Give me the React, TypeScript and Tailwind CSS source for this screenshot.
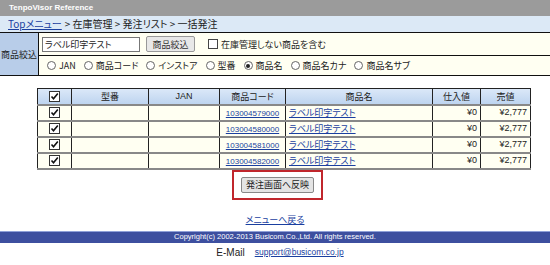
const jp = {
  fontFamily: '"Noto Sans CJK JP", "Liberation Sans", sans-serif',
  fontFeatureSettings: '"palt"',
};
const lat = { fontFamily: '"Liberation Sans", "Noto Sans CJK JP", sans-serif' };

const rows = ["103004579000", "103004580000", "103004581000", "103004582000"];

function Check() {
  return (
    <span className="inline-flex h-[11px] w-[11px] items-center justify-center border border-[#333] bg-white align-middle">
      <svg width="9" height="9" viewBox="0 0 9 9">
        <path d="M1.5 4.5 L3.5 6.8 L7.8 1.5" stroke="#111" strokeWidth="1.6" fill="none" />
      </svg>
    </span>
  );
}

function Radio({ on }: { on?: boolean }) {
  return (
    <span className="inline-flex h-[9px] w-[9px] items-center justify-center rounded-full border border-[#666] bg-white">
      {on && <span className="h-[4px] w-[4px] rounded-full bg-[#222]" />}
    </span>
  );
}

export default function App() {
  const radios = ["JAN", "商品コード", "インストア", "型番", "商品名", "商品名カナ", "商品名サブ"];

  return (
    <div className="h-[265px] w-[550px] overflow-hidden bg-white text-[10px] leading-none text-[#222]" style={jp}>
      <div className="flex h-[16px] items-center bg-[#9b9b9b] pl-[9px] text-[8px] font-bold text-white" style={lat}>
        TenpoVisor Reference
      </div>
      <div className="flex h-[16px] items-center bg-[#dce9f6] pl-[8px] text-[10px]">
        <a className="text-[#1a3fa0] underline">Topメニュー</a>
        <span className="ml-[3px]">&gt; 在庫管理 &gt; 発注リスト &gt; 一括発注</span>
      </div>

      <div className="flex h-[44px] border-y border-[#111]">
        <div className="flex w-[39px] items-center justify-center whitespace-nowrap border-r border-[#111] bg-[#b8cde9] text-[9px]">
          商品絞込
        </div>
        <div className="flex flex-1 flex-col bg-[#fffff2]">
          <div className="flex h-[23px] items-center border-b border-[#111] pl-[3px]">
            <div className="flex h-[15px] w-[98px] items-center border border-[#777] bg-white px-[2px] text-[9px]">
              ラベル印字テスト
            </div>
            <button className="ml-[6px] h-[16px] w-[49px] rounded-[2px] border border-[#999] bg-[#e8e8e8] text-[9px] text-[#333]">
              商品絞込
            </button>
            <span className="ml-[13px] inline-block h-[10px] w-[10px] border border-[#444] bg-white" />
            <span className="ml-[3px] text-[9px]">在庫管理しない商品を含む</span>
          </div>
          <div className="flex flex-1 items-center gap-[8px] pl-[8px] text-[9px]">
            {radios.map((r) => (
              <span key={r} className="flex items-center gap-[3px]">
                <Radio on={r === "商品名"} />
                {r}
              </span>
            ))}
          </div>
        </div>
      </div>

      <table className="ml-[37px] mt-[12px] w-[493px] table-fixed border-collapse text-[9px]">
        <colgroup>
          <col className="w-[34px]" />
          <col className="w-[77px]" />
          <col className="w-[71px]" />
          <col className="w-[66px]" />
          <col className="w-[147px]" />
          <col className="w-[48px]" />
          <col className="w-[50px]" />
        </colgroup>
        <thead>
          <tr className="h-[16px] bg-gradient-to-b from-[#dbe8f8] to-[#bcd3ef]">
            <th className="border border-[#222] p-0 font-normal"><Check /></th>
            <th className="border border-[#222] p-0 font-normal">型番</th>
            <th className="border border-[#222] p-0 font-normal" style={lat}>JAN</th>
            <th className="border border-[#222] p-0 font-normal">商品コード</th>
            <th className="border border-[#222] p-0 font-normal">商品名</th>
            <th className="border border-[#222] p-0 font-normal">仕入値</th>
            <th className="border border-[#222] p-0 font-normal">売値</th>
          </tr>
        </thead>
        <tbody>
          {rows.map((code) => (
            <tr key={code} className="h-[16px] bg-[#fffff2]">
              <td className="border-x border-y-2 border-x-[#222] border-y-[#888] p-0 text-center"><Check /></td>
              <td className="border-x border-y-2 border-x-[#222] border-y-[#888] p-0"></td>
              <td className="border-x border-y-2 border-x-[#222] border-y-[#888] p-0"></td>
              <td className="border-x border-y-2 border-x-[#222] border-y-[#888] p-0 text-center">
                <a className="text-[8px] text-[#1a3fa0] underline" style={lat}>
                  {code}
                </a>
              </td>
              <td className="border-x border-y-2 border-x-[#222] border-y-[#888] p-0 pl-[3px]">
                <a className="text-[#1a3fa0] underline">ラベル印字テスト</a>
              </td>
              <td className="border-x border-y-2 border-x-[#222] border-y-[#888] p-0 pr-[3px] text-right" style={lat}>¥0</td>
              <td className="border-x border-y-2 border-x-[#222] border-y-[#888] p-0 pr-[3px] text-right" style={lat}>¥2,777</td>
            </tr>
          ))}
        </tbody>
      </table>

      <div className="flex justify-center">
        <div className="ml-[5px] flex h-[30px] w-[91px] items-center justify-center border-2 border-[#c0262c]">
          <button className="h-[16px] w-[73px] rounded-[2px] border border-[#888] bg-[#e4e4e4] text-[9px] text-[#222]">
            発注画面へ反映
          </button>
        </div>
      </div>

      <div className="mt-[15px] flex h-[10px] items-center justify-center">
        <a className="text-[9px] text-[#1a3fa0] underline">メニューへ戻る</a>
      </div>

      <div className="mt-[6px] flex h-[12px] items-center justify-center border-t border-[#8fa0d8] bg-[#3d4f9f] text-[7.5px] text-white" style={lat}>
        Copyright(c) 2002-2013 Busicom.Co.,Ltd. All rights reserved.
      </div>
      <div className="ml-[10px] mt-[5px] flex items-center justify-center gap-[10px]" style={lat}>
        <span className="text-[10px]">E-Mail</span>
        <a className="text-[8.5px] text-[#1a3fa0] underline">support@busicom.co.jp</a>
      </div>
    </div>
  );
}
